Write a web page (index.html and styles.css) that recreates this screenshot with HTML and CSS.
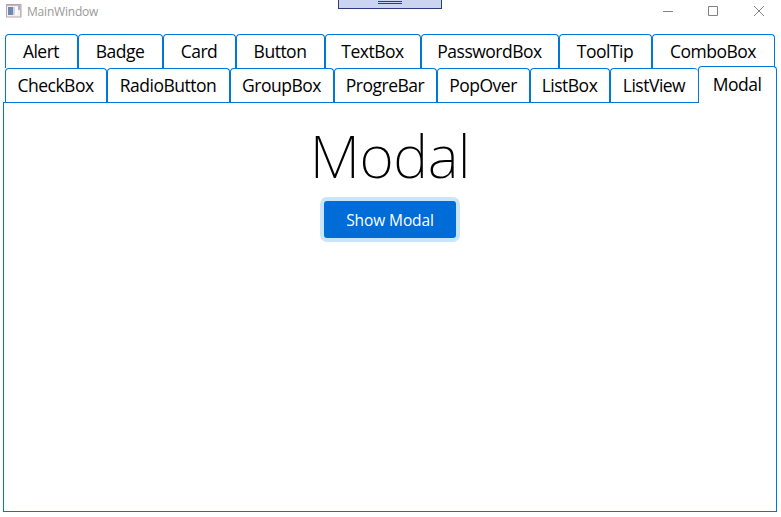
FILE: index.html
```html
<!DOCTYPE html>
<html lang="en">
<head>
<meta charset="utf-8">
<title>MainWindow</title>
<link rel="stylesheet" href="styles.css">
</head>
<body>
<div class="window">
  <header class="titlebar">
    <svg class="app-icon" width="16" height="14" viewBox="0 0 16 14"><rect x=".5" y=".5" width="14.5" height="12.5" fill="#f4eff2" stroke="#b8a5ad"/><path d="M1 1.5h14M14.500 1v12" stroke="#c4b5bc"/><rect x="2" y="3" width="5" height="8" fill="#7087ae"/><rect x="7" y="3" width="2" height="8" fill="#c9d5e4"/><rect x="9" y="3" width="3" height="8" fill="#faf8f9"/><rect x="12" y="2" width="2" height="4" fill="#a9b2cb"/></svg>
    <span class="title">MainWindow</span>
    <svg class="controls" width="104" height="14" viewBox="0 0 104 14" fill="none" stroke="#858085"><path d="M0 7.5h10M45.500 2.500h9v9h-9zM91 2l10 10M101 2L91 12"/></svg>
    <div class="debug-bar"><i></i></div>
  </header>
  <nav class="tabs">
    <div class="row row-top">
      <div class="tab"><span>Alert</span></div><div class="tab"><span>Badge</span></div><div class="tab"><span>Card</span></div><div class="tab"><span>Button</span></div><div class="tab"><span>TextBox</span></div><div class="tab"><span>PasswordBox</span></div><div class="tab"><span>ToolTip</span></div><div class="tab"><span>ComboBox</span></div>
    </div>
    <div class="row row-bottom">
      <div class="tab"><span>CheckBox</span></div><div class="tab"><span>RadioButton</span></div><div class="tab"><span>GroupBox</span></div><div class="tab"><span>ProgreBar</span></div><div class="tab"><span>PopOver</span></div><div class="tab"><span>ListBox</span></div><div class="tab"><span>ListView</span></div><div class="tab selected"><span>Modal</span></div>
    </div>
  </nav>
  <main class="panel">
    <h1>Modal</h1>
    <button class="primary">Show Modal</button>
  </main>
</div>
</body>
</html>
```
FILE: styles.css
```css
* { box-sizing: border-box; }
body { margin: 0; background: #fff; color: #000; font-family: "Open Sans", "Noto Sans", sans-serif; }
.window { width: 781px; height: 517px; overflow: hidden; }
.titlebar { position: relative; display: flex; height: 34px; padding: 4px 14px 0 6px; }
.title { margin-left: 5px; color: #999; font-size: 12px; line-height: 16px; letter-spacing: -.2px; }
.controls { margin-left: auto; }
.debug-bar { position: absolute; left: 338px; top: 0; width: 104px; height: 9px; background: #ccd5f0; border: 1px solid #293e7b; border-top: 0; }
.debug-bar i { display: block; width: 24px; height: 3px; margin: 1px auto 0; border: solid #293e7b; border-width: 1px 0; }
.row { display: grid; height: 34px; padding-left: 5px; }
.row-top { grid-template-columns: 73px 85px 73px 89px 96px 138px 93px 123px; }
.row-bottom { grid-template-columns: 102px 123px 104px 103px 93px 80px 88px 80px; }
.tab { height: 34px; padding-right: 1px; border: 1px solid #0078d7; border-bottom: 0; border-radius: 4px 4px 0 0; text-align: center; font-size: 17.5px; line-height: 33px; letter-spacing: -.5px; white-space: nowrap; }
.selected { position: relative; z-index: 1; width: 79px; height: 37px; margin-top: -2px; background: #fff; line-height: 35px; }
.row-bottom .tab:nth-child(7) { border-right: 0; }
.panel { display: flex; flex-direction: column; align-items: center; width: 774px; height: 410px; margin-left: 3px; padding-top: 16px; border: 1px solid #0078d7; }
h1 { margin: 0; font: 200 59px/72px "Noto Sans", "Open Sans", sans-serif; letter-spacing: -.5px; }
.primary { width: 132px; height: 37px; margin-top: 10px; padding: 1px 0 0; border: 0; border-radius: 3px; background: #006cd8; box-shadow: 0 0 0 4px #c8e5fc; color: #fff; font: 15.5px "Open Sans", sans-serif; letter-spacing: -.1px; }
```
